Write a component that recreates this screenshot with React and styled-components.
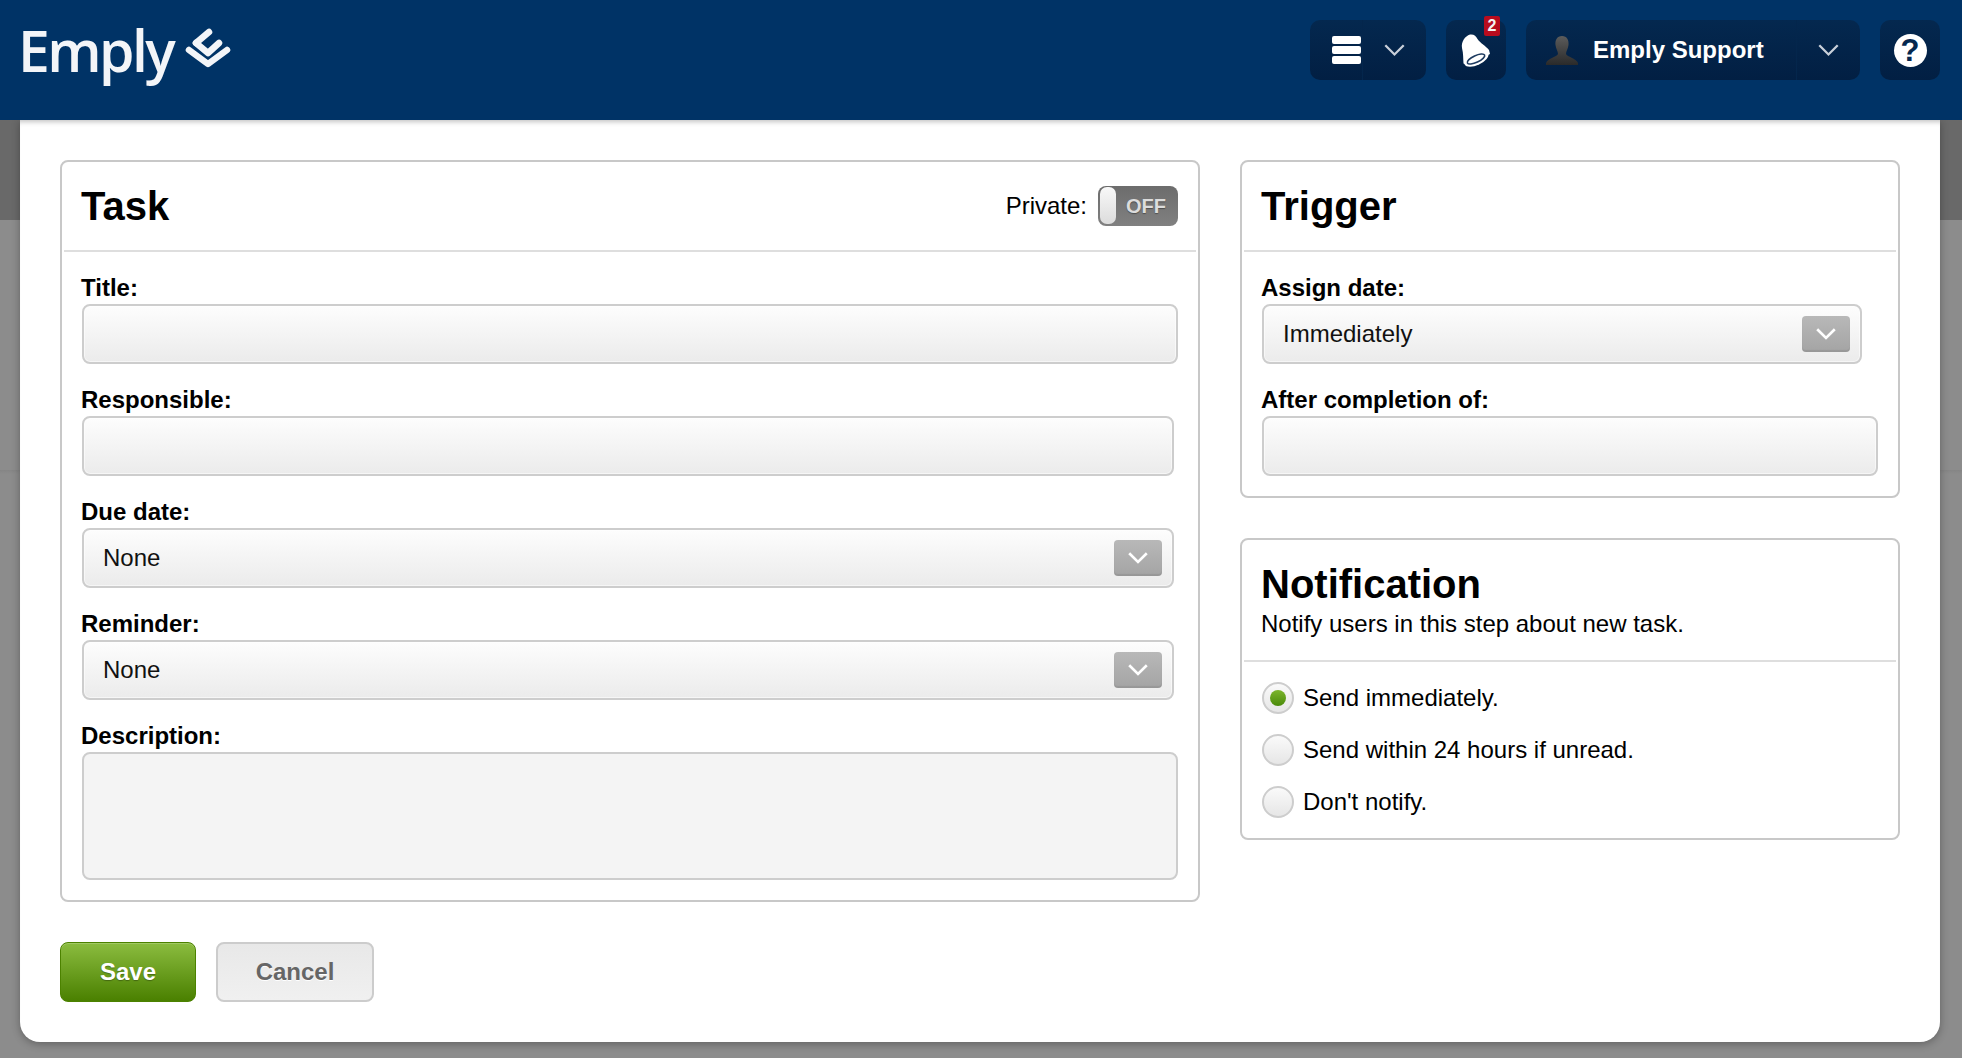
import React from "react";
import styled, { createGlobalStyle } from "styled-components";

const GlobalStyle = createGlobalStyle`
  html, body {
    margin: 0;
    padding: 0;
  }
  body {
    font-family: "Liberation Sans", Arial, sans-serif;
    color: #000;
    background:
      linear-gradient(#696969 0, #696969 220px, #8c8c8c 220px, #8c8c8c 470px, #858585 470px, #8c8c8c 474px);
    min-height: 1058px;
    overflow: hidden;
  }
  * {
    box-sizing: border-box;
  }
`;

const TopBar = () => (
  <Header>
    <Logo>
      <LogoText>Emply</LogoText>
      <svg width="48" height="44" viewBox="0 0 48 44">
        <g fill="none" stroke="#f3f5f8" strokeWidth="6.5" strokeLinecap="round" strokeLinejoin="round">
          <path d="M5 24 L24 38 L43 24" />
          <path d="M12 17 L24 27 L35 17" />
          <path d="M12 17 L25 6" />
        </g>
      </svg>
    </Logo>
    <HeaderActions>
      <HeaderButton $width={116}>
        <ButtonPart>
          <MenuIcon>
            <span />
            <span />
            <span />
          </MenuIcon>
        </ButtonPart>
        <Caret />
      </HeaderButton>
      <HeaderButton $width={60}>
        <BellIcon />
        <Badge>2</Badge>
      </HeaderButton>
      <UserButton $width={334}>
        <UserIcon />
        <UserName>Emply Support</UserName>
        <Caret $last />
      </UserButton>
      <HeaderButton $width={60}>
        <HelpIcon>?</HelpIcon>
      </HeaderButton>
    </HeaderActions>
  </Header>
);

const BellIcon = () => (
  <svg width="30" height="33" viewBox="0 0 30 33">
    <path d="M9 0.5 C13 0 15 2 16.5 5 C19 9 25 12 28 16 L29 20 L6 31 L2.5 29.5 C2 24 2.5 20 1 14 C0 8 4 2 9 0.5 Z" fill="#fff" />
    <ellipse cx="15.5" cy="25" rx="13" ry="6" transform="rotate(-25 15.5 25)" fill="#fff" />
    <ellipse cx="15" cy="25" rx="9.5" ry="3.4" transform="rotate(-25 15 25)" fill="none" stroke="#1d3a5f" strokeWidth="1.6" />
  </svg>
);

const UserIcon = () => (
  <svg width="32" height="29" viewBox="0 0 32 29">
    <defs>
      <linearGradient id="userShade" x1="0" y1="0" x2="0" y2="1">
        <stop offset="0" stopColor="#5c5c5c" />
        <stop offset="1" stopColor="#2a2a2a" />
      </linearGradient>
    </defs>
    <path
      d="M16 0 C21 0 23 4 22.5 9 C22 13 20 15 20 18 C21 21 30 22 32 27 L32 29 L0 29 L0 27 C2 22 11 21 12 18 C12 15 10 13 9.5 9 C9 4 11 0 16 0 Z"
      fill="url(#userShade)"
    />
  </svg>
);

const Chevron = ({ color = "#fff", width = 22, stroke = 2.4 }) => (
  <svg width={width} height={width * 0.6} viewBox="0 0 20 12">
    <path d="M2 2 L10 10 L18 2" fill="none" stroke={color} strokeWidth={stroke} />
  </svg>
);

const Caret = ({ $last }) => (
  <CaretPart $last={$last}>
    <Chevron color="#c9d0da" width={23} stroke={2} />
  </CaretPart>
);

const Field = ({ label, width, tall, value }) => (
  <FieldRow>
    <Label>{label}</Label>
    {tall ? (
      <TextArea />
    ) : value ? (
      <SelectBox $width={width}>
        {value}
        <SelectArrow>
          <Chevron />
        </SelectArrow>
      </SelectBox>
    ) : (
      <InputBox $width={width} />
    )}
  </FieldRow>
);

const RadioRow = ({ label, checked }) => (
  <RadioItem>
    <RadioCircle>{checked && <RadioDot />}</RadioCircle>
    {label}
  </RadioItem>
);

export default function App() {
  return (
    <>
      <GlobalStyle />
      <TopBar />
      <Modal>
        <Columns>
          <Panel $width={1140}>
            <PanelHead>
              <PanelTitle>Task</PanelTitle>
              <PrivateWrap>
                Private:
                <Toggle>
                  <ToggleKnob />
                  OFF
                </Toggle>
              </PrivateWrap>
            </PanelHead>
            <PanelBody>
              <Field label="Title:" width={1096} />
              <Field label="Responsible:" width={1092} />
              <Field label="Due date:" width={1092} value="None" />
              <Field label="Reminder:" width={1092} value="None" />
              <Field label="Description:" tall />
            </PanelBody>
          </Panel>
          <SideColumn>
            <Panel>
              <PanelHead>
                <PanelTitle>Trigger</PanelTitle>
              </PanelHead>
              <PanelBody>
                <Field label="Assign date:" width={600} value="Immediately" />
                <Field label="After completion of:" width={616} />
              </PanelBody>
            </Panel>
            <Panel>
              <NoticeHead>
                <PanelTitle>Notification</PanelTitle>
                <Notice>Notify users in this step about new task.</Notice>
              </NoticeHead>
              <RadioList>
                <RadioRow label="Send immediately." checked />
                <RadioRow label="Send within 24 hours if unread." />
                <RadioRow label="Don't notify." />
              </RadioList>
            </Panel>
          </SideColumn>
        </Columns>
        <Buttons>
          <SaveButton>Save</SaveButton>
          <CancelButton>Cancel</CancelButton>
        </Buttons>
      </Modal>
    </>
  );
}

const Header = styled.header`
  height: 120px;
  background: #003366;
  display: flex;
  justify-content: space-between;
  padding: 20px 22px 0 18px;
  position: relative;
  z-index: 2;
`;
const Logo = styled.div`
  display: flex;
  align-items: flex-start;
  gap: 11px;
  color: #f3f5f8;
  svg {
    margin-top: 6px;
  }
`;
const LogoText = styled.div`
  font-family: "Open Sans", sans-serif;
  font-size: 57px;
  font-weight: 600;
  line-height: 60px;
  letter-spacing: -2.6px;
`;
const HeaderActions = styled.div`
  display: flex;
  gap: 20px;
  height: 60px;
`;
const HeaderButton = styled.div`
  width: ${(p) => p.$width}px;
  height: 60px;
  border-radius: 10px;
  background: linear-gradient(#04284f, #021f43);
  display: flex;
  align-items: center;
  justify-content: center;
  position: relative;
  color: #fff;
`;
const UserButton = styled(HeaderButton)`
  justify-content: flex-start;
  padding-left: 20px;
`;
const ButtonPart = styled.div`
  width: 52px;
  height: 100%;
  display: flex;
  align-items: center;
  padding-left: 22px;
`;
const CaretPart = styled.div`
  flex: 1;
  height: 100%;
  display: flex;
  align-items: center;
  justify-content: center;
  border-left: 1px solid #04264c;
  ${(p) => p.$last && "flex: none; width: 64px; margin-left: auto;"}
`;
const MenuIcon = styled.div`
  width: 29px;
  flex: none;
  display: flex;
  flex-direction: column;
  gap: 2px;
  span {
    height: 8px;
    border-radius: 2px;
    background: #fff;
  }
`;
const Badge = styled.div`
  position: absolute;
  top: -4px;
  right: 6px;
  width: 16px;
  height: 20px;
  background: #b80c1e;
  border-radius: 2px;
  color: #f4f4f4;
  font-size: 16px;
  font-weight: 700;
  line-height: 20px;
  text-align: center;
`;
const UserName = styled.div`
  font-size: 24px;
  font-weight: 700;
  margin-left: 15px;
  white-space: nowrap;
`;
const HelpIcon = styled.div`
  width: 33px;
  height: 33px;
  border-radius: 50%;
  background: #fff;
  color: #04284f;
  font-size: 31px;
  font-weight: 700;
  line-height: 33px;
  text-align: center;
`;
const Modal = styled.main`
  width: 1920px;
  height: 922px;
  margin-left: 20px;
  padding: 40px 40px 0;
  background: #fff;
  border-radius: 0 0 20px 20px;
  box-shadow: inset 0 6px 5px -4px #c4c4c4, 0 2px 8px rgba(0, 0, 0, 0.3);
`;
const Columns = styled.div`
  display: flex;
  gap: 40px;
  align-items: flex-start;
`;
const SideColumn = styled.div`
  width: 660px;
  display: flex;
  flex-direction: column;
  gap: 40px;
`;
const Panel = styled.section`
  width: ${(p) => (p.$width ? `${p.$width}px` : "100%")};
  background: #fff;
  border: 2px solid #c8c8c8;
  border-radius: 8px;
  padding: 0 2px 0;
`;
const PanelHead = styled.div`
  height: 90px;
  border-bottom: 2px solid #dedede;
  display: flex;
  align-items: center;
  justify-content: space-between;
  padding: 0 18px 0 17px;
`;
const NoticeHead = styled.div`
  height: 122px;
  border-bottom: 2px solid #dedede;
  padding: 21px 17px 0;
`;
const PanelTitle = styled.h2`
  margin: 0;
  font-size: 40px;
  line-height: 46px;
  font-weight: 700;
`;
const Notice = styled.div`
  font-size: 24px;
  line-height: 30px;
  margin-top: 2px;
`;
const PrivateWrap = styled.div`
  display: flex;
  align-items: center;
  gap: 11px;
  font-size: 24px;
`;
const Toggle = styled.div`
  width: 80px;
  height: 40px;
  border-radius: 8px;
  background: linear-gradient(#6c6c6c, #808080);
  color: #dcdcdc;
  font-size: 20px;
  font-weight: 700;
  text-shadow: 0 1px 1px rgba(0, 0, 0, 0.35);
  display: flex;
  align-items: center;
  justify-content: flex-end;
  padding-right: 12px;
  position: relative;
`;
const ToggleKnob = styled.div`
  position: absolute;
  left: 2px;
  top: 1px;
  width: 16px;
  height: 37px;
  border-radius: 7px;
  background: linear-gradient(#f8f8f8, #dcdcdc);
`;
const PanelBody = styled.div`
  padding: 17px 16px 20px 17px;
  display: flex;
  flex-direction: column;
  gap: 17px;
`;
const FieldRow = styled.div`
  display: flex;
  flex-direction: column;
`;
const Label = styled.label`
  font-size: 24px;
  font-weight: 700;
  line-height: 38px;
  height: 35px;
`;
const InputBox = styled.div`
  width: ${(p) => p.$width}px;
  height: 60px;
  margin-left: 1px;
  border: 2px solid #cdcdcd;
  border-radius: 8px;
  background: linear-gradient(#fdfdfd, #ebebeb);
  box-shadow: inset 0 0 0 1px rgba(255, 255, 255, 0.55);
`;
const SelectBox = styled(InputBox)`
  display: flex;
  align-items: center;
  justify-content: space-between;
  padding: 0 10px 0 19px;
  font-size: 24px;
  color: #111;
`;
const SelectArrow = styled.div`
  width: 48px;
  height: 36px;
  border-radius: 4px;
  background: linear-gradient(#b8b8b8, #a4a4a4);
  box-shadow: inset 0 -2px 1px rgba(0, 0, 0, 0.08);
  display: flex;
  align-items: center;
  justify-content: center;
`;
const TextArea = styled.div`
  width: 1096px;
  height: 128px;
  margin-left: 1px;
  border: 2px solid #cdcdcd;
  border-radius: 8px;
  background: #f4f4f4;
`;
const RadioList = styled.div`
  padding: 20px 18px 0;
  height: 176px;
  display: flex;
  flex-direction: column;
  gap: 20px;
`;
const RadioItem = styled.div`
  display: flex;
  align-items: center;
  gap: 9px;
  height: 32px;
  font-size: 24px;
`;
const RadioCircle = styled.div`
  width: 32px;
  height: 32px;
  border: 2px solid #cdcdcd;
  border-radius: 50%;
  background: linear-gradient(#fafafa, #e6e6e6);
  display: flex;
  align-items: center;
  justify-content: center;
`;
const RadioDot = styled.div`
  width: 16px;
  height: 16px;
  border-radius: 50%;
  background: linear-gradient(#7cb52c, #4a8a0a);
`;
const Buttons = styled.div`
  display: flex;
  gap: 20px;
  margin-top: 40px;
`;
const SaveButton = styled.button`
  width: 136px;
  height: 60px;
  border: 1px solid #4c8200;
  border-radius: 8px;
  background: linear-gradient(#8bbc3f, #4a8000);
  box-shadow: inset 0 1px 0 rgba(255, 255, 255, 0.2);
  color: #fff;
  font: 700 24px "Liberation Sans", Arial, sans-serif;
  text-shadow: 0 1px 1px rgba(0, 0, 0, 0.3);
`;
const CancelButton = styled.button`
  width: 158px;
  height: 60px;
  border: 2px solid #cccccc;
  border-radius: 8px;
  background: linear-gradient(#e8e8e8, #f0f0f0);
  color: #666;
  font: 700 24px "Liberation Sans", Arial, sans-serif;
  text-shadow: 0 1px 0 #fff;
`;
